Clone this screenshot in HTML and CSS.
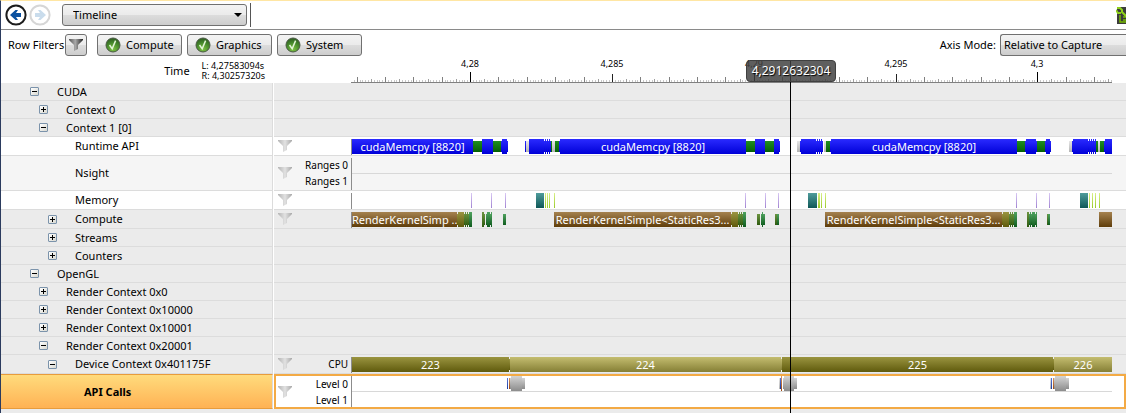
FILE: index.html
```html
<!DOCTYPE html>
<html lang="en">
<head>
<meta charset="utf-8">
<title>Timeline</title>
<link rel="stylesheet" href="styles.css">
</head>
<body>
<svg class="defs" width="0" height="0" aria-hidden="true">
  <defs>
    <linearGradient id="funnel-dark" x1="0" x2="1"><stop offset="0" stop-color="#555"/><stop offset=".45" stop-color="#aaa"/><stop offset="1" stop-color="#222"/></linearGradient>
    <linearGradient id="funnel-light" x1="0" x2="1"><stop offset="0" stop-color="#b4b4b4"/><stop offset=".5" stop-color="#e2e2e2"/><stop offset="1" stop-color="#a8a8a8"/></linearGradient>
    <radialGradient id="green-ball" cx=".5" cy=".8" r=".8"><stop offset="0" stop-color="#7cc142"/><stop offset=".6" stop-color="#43852a"/><stop offset="1" stop-color="#2c5a20"/></radialGradient>
    <symbol id="check" viewBox="0 0 16 16"><circle cx="8" cy="8" r="7" fill="url(#green-ball)" stroke="#4b5a45"/><path d="M4.5 8l2.7 3.8L10.6 3.6" fill="none" stroke="#e4f4d8" stroke-width="1.5"/></symbol>
    <symbol id="funnel" viewBox="0 0 14 12"><path d="M0 0h14v1L9 6v4l-4 2V6L0 1z"/></symbol>
  </defs>
</svg>
<div class="app">
  <header class="toolbar">
    <button class="nav" type="button" aria-label="Back">
      <svg width="22" height="22" viewBox="0 0 22 22"><circle cx="11" cy="11" r="9.600" fill="#fff" stroke="#1c1c1c" stroke-width="2"/><path d="M5 11l5.500-5h2.500L11 9h5v4h-5l2 3h-2.500z" fill="#0a50a0"/></svg>
    </button>
    <button class="nav" type="button" aria-label="Forward" disabled>
      <svg width="22" height="22" viewBox="0 0 22 22"><circle cx="11" cy="11" r="9.600" fill="#fff" stroke="#d6d6d6" stroke-width="2"/><path d="M17 11l-5.500-5H9l2 3H6v4h5l-2 3h2.500z" fill="#c9dcec"/></svg>
    </button>
    <div class="page-select">
      <select class="combo" aria-label="Page"><option>Timeline</option></select>
      <svg class="combo-arrow" width="8" height="4" viewBox="0 0 8 4"><path d="M0 0h8L4 4z"/></svg>
    </div>
    <span class="separator"></span>
    <button class="options" type="button" aria-label="Options">
      <svg width="16" height="17" viewBox="0 0 16 17"><path fill="#3c3c3c" d="M1 0h15v17H1z"/><path d="M4 8v7h10M7 10h3M7 13h6M12 3h4" stroke="#76b900" fill="none" stroke-width="1.500"/><path d="M1 1l3 0 2 2v2l7 7M0 3l2 3h3" stroke="#8ed01c" stroke-width="2" fill="none"/></svg>
    </button>
  </header>

  <div class="filters">
    <span class="caption">Row Filters</span>
    <button class="btn icon-btn" type="button" aria-label="Filter rows"><svg width="14" height="12" fill="url(#funnel-dark)"><use href="#funnel"/></svg></button>
    <button class="btn" type="button"><svg width="16" height="16"><use href="#check"/></svg>Compute</button>
    <button class="btn" type="button"><svg width="16" height="16"><use href="#check"/></svg>Graphics</button>
    <button class="btn" type="button"><svg width="16" height="16"><use href="#check"/></svg>System</button>
    <label class="axis-label" for="axis-mode">Axis Mode:</label>
    <select class="combo axis-mode" id="axis-mode"><option>Relative to Capture</option></select>
  </div>

  <main class="timeline">
    <div class="time-row">
      <div class="time-info"><span>Time</span><div class="range">L: 4,27583094s<br>R: 4,30257320s</div></div>
      <div class="ruler" id="ruler"></div>
    </div>
    <div id="rows"></div>
    <div class="cursor-layer"><div class="cursor" id="cursor"><output class="cursor-time">4,2912632304</output></div></div>
  </main>
</div>
<script src="timeline.js"></script>
</body>
</html>
```
FILE: styles.css
```css
* { box-sizing: border-box; }

body {
  margin: 0;
  overflow: hidden;
  background: #fff;
  color: #000;
  font: 11px/18px "Noto Sans", "Open Sans", sans-serif;
}

button, select { font: inherit; color: inherit; }
button { padding: 0; }
.defs { position: absolute; }

.app {
  display: flex;
  flex-direction: column;
  min-height: 100vh;
  border-left: 1px solid #2b3b5e;
  border-top: 1px solid #ffe6a3;
}

.toolbar {
  display: flex;
  align-items: center;
  height: 29px;
  padding-left: 4px;
  border-bottom: 1px solid #8a8a8a;
}
.nav {
  width: 22px;
  height: 22px;
  margin-right: 2px;
  border: 0;
  background: none;
}
.nav svg { display: block; }
.page-select {
  position: relative;
  width: 185px;
  margin-left: 9px;
}
.combo {
  display: block;
  width: 100%;
  height: 22px;
  padding: 0 10px;
  border: 1px solid #707070;
  border-radius: 3px;
  background: linear-gradient(#f3f3f3, #ebebeb 50%, #dddddd 50%, #cdcdcd);
  appearance: none;
}
.combo-arrow { position: absolute; right: 5px; top: 9px; }
.separator { width: 1px; height: 24px; margin-left: 3px; background: #555; }
.options { display: flex; width: 10px; margin-left: auto; border: 0; background: none; overflow: hidden; }
.options svg { flex: none; }

.filters {
  display: flex;
  align-items: center;
  height: 29px;
  padding-left: 7px;
}
.caption { width: 57px; white-space: nowrap; }
.btn {
  display: flex;
  align-items: center;
  gap: 5px;
  width: 85px;
  height: 22px;
  margin-right: 5px;
  padding-left: 7px;
  border: 1px solid #707070;
  border-radius: 3px;
  background: linear-gradient(#f3f3f3, #ebebeb 50%, #dddddd 50%, #cdcdcd);
}
.icon-btn { width: 22px; margin-right: 10px; padding-left: 3px; }
.axis-label { margin-left: auto; margin-right: 4px; white-space: nowrap; }
.axis-mode {
  flex: none;
  width: 126px;
  padding: 0 3px;
  border-right: 0;
  border-radius: 3px 0 0 3px;
}

.timeline {
  position: relative;
  flex: 1;
  background: #ebebeb;
}
.time-row {
  display: flex;
  height: 24px;
  background: #fff;
}
.time-info {
  display: flex;
  align-items: center;
  justify-content: flex-end;
  gap: 12px;
  width: 350px;
  padding-right: 86px;
}
.range { font-size: 9px; line-height: 10px; }
.ruler {
  position: relative;
  flex: 1;
  margin-right: 14px;
  border-bottom: 1px solid #808080;
}
.tick { position: absolute; bottom: 0; width: 1px; height: 2px; background: #c8c8c8; }
.tick.half { height: 3px; background: #a0a0a0; }
.tick.unit { height: 5px; background: #808080; }
.tick.five { height: 8px; background: #222; }
.tick.ten { height: 10px; background: #000; }
.tick-label {
  position: absolute;
  top: 0;
  font-size: 9px;
  line-height: 10px;
  transform: translateX(-50%);
}

.row {
  display: flex;
  height: 18px;
}
.row.single { height: 19px; }
.row.double { height: 35px; }
.label, .lane { border-bottom: 1px solid #dcdcdc; }
.label {
  display: flex;
  align-items: center;
  gap: 18px;
  width: 272px;
  border-right: 1px solid #dcdcdc;
  white-space: nowrap;
}
.depth-0 { padding-left: 29px; }
.depth-1 { padding-left: 38px; }
.depth-2 { padding-left: 47px; }
.leaf { padding-left: 74px; }
.leaf.deep { padding-left: 83px; }
.lane {
  display: flex;
  flex: 1;
  min-width: 0;
  margin-left: 1px;
  border-left: 0;
}
.label, .lane { background: #ebebeb; }
.row { background: #fff; }
.white > * { background: #fff; }
.pale > * { background: #f5f5f5; }

.toggle {
  width: 9px;
  height: 9px;
  border: 1px solid #7b93ab;
  border-radius: 1px;
  background:
    linear-gradient(#000, #000) center / 5px 1px no-repeat,
    linear-gradient(135deg, #fff, #d8d8d0);
}
.toggle.closed {
  background:
    linear-gradient(#000, #000) center / 5px 1px no-repeat,
    linear-gradient(#000, #000) center / 1px 5px no-repeat,
    linear-gradient(135deg, #fff, #d8d8d0);
}

.lane-head {
  display: flex;
  align-items: center;
  justify-content: space-between;
  width: 77px;
  padding: 0 3px 0 4px;
}
.lane-head svg { fill: url(#funnel-light); }
.levels { font-size: 10px; line-height: 16px; text-align: right; }
.track {
  position: relative;
  flex: 1;
  margin: 2px 14px 0 0;
}
.track::before {
  content: "";
  position: absolute;
  inset: 0 auto 0 0;
  width: 1px;
  background: #8c8c8c;
}
.double .track::after {
  content: "";
  position: absolute;
  inset: 15px 0 auto 1px;
  height: 1px;
  background: #d8d8d8;
}

.selected .label {
  border-top: 1px solid #e89c3c;
  border-bottom-color: #e89c3c;
  background: linear-gradient(#ffdb7c, #ffb254);
  font-weight: bold;
}
.selected .lane {
  border: 2px solid #f3aa45;
  background: #fff;
}
.selected .lane-head { width: 75px; padding-left: 2px; }
.selected .track { margin: 0 12px 0 0; }

.bar {
  position: absolute;
  top: 0;
  height: 15px;
  color: #fff;
  line-height: 15px;
  text-align: center;
  white-space: nowrap;
}
.bar.short { top: 2px; height: 11px; }
.blue { background: linear-gradient(#2a2aff, #0000d8); }
.green { background: linear-gradient(#1f8f1f, #056005); }
.grey { background: linear-gradient(#d4d4d4, #8c8c8c); }
.silver { background: linear-gradient(#e6e6e6, #b4b4b4); }
.purple { background: linear-gradient(#d9c8f4, #a184d2); }
.teal { background: linear-gradient(#4f9c9c, #0e5757); }
.lime { background: linear-gradient(#d9f08a, #9acb2a); }
.brown { background: linear-gradient(#a5824f, #5f3d0a); }
.olive { background: linear-gradient(#9a9440, #5f5a0c); }
.khaki { background: linear-gradient(#c4bd70, #857f35); }
.moss { background: linear-gradient(#6c9440, #2e5a10); }
.leafy { background: linear-gradient(#4fa25f, #0f5c1e); }
.navy { background: linear-gradient(#5878d8, #1c3a9c); }
.rust { background: linear-gradient(#d89460, #9c4a14); }

.cursor-layer {
  position: absolute;
  inset: 1px 14px 0 350px;
  pointer-events: none;
}
.cursor {
  position: absolute;
  inset: 0 auto 0 0;
  width: 1px;
  background: #000;
}
.cursor-time {
  position: absolute;
  top: 0;
  left: -44px;
  width: 90px;
  height: 22px;
  border: 1px solid #404040;
  border-radius: 4px;
  background: rgba(64, 64, 64, 0.84);
  color: #fff;
  font-size: 12px;
  line-height: 20px;
  text-align: center;
  text-shadow: 1px 1px 1px #000;
}
```
FILE: timeline.js
```js
// A leading "-" on the kind makes a low bar, "|" a row of one-step teeth.
const SCALE = 761;
const pct = v => (v / SCALE * 100) + '%';

const runtime = [
  ['blue', 1, 122, 'cudaMemcpy [8820]'], ['-green', 122, 131], ['blue', 131, 142], ['-green', 142, 150], ['-blue', 150, 157], ['blue', 151, 156],
  ['-blue', 174, 175], ['-silver', 175, 178], ['blue', 178, 193], ['|blue', 193, 200], ['-green', 200, 201], ['-silver', 201, 204], ['-green', 204, 208], ['-blue', 208, 209],
  ['blue', 209, 395, 'cudaMemcpy [8820]'], ['-green', 395, 404], ['blue', 404, 414], ['-green', 414, 423], ['-blue', 423, 429], ['blue', 423, 428],
  ['-silver', 446, 449], ['-blue', 449, 450], ['blue', 450, 465], ['|blue', 465, 472], ['-silver', 473, 475], ['-green', 475, 479], ['-blue', 479, 480],
  ['blue', 480, 666, 'cudaMemcpy [8820]'], ['-green', 666, 674], ['blue', 675, 685], ['-blue', 674, 686], ['-green', 686, 694], ['-blue', 694, 700], ['blue', 695, 699],
  ['-silver', 718, 721], ['-blue', 721, 722], ['blue', 722, 737], ['|blue', 737, 745], ['-green', 745, 747], ['-silver', 747, 749], ['-green', 749, 753], ['-blue', 753, 754], ['blue', 754, 761]
];
const memory = [
  ...[120, 140, 154, 394, 414, 427, 665, 685, 698].map(x => ['purple', x, x + 1]),
  ['teal', 185, 193], ['teal', 457, 466], ['teal', 729, 737],
  ...[194, 196, 198, 203, 467, 468, 470, 474, 738, 741, 744, 748].map(x => ['lime', x, x + 1])
];
const compute = [
  ['brown', 1, 106, 'RenderKernelSimp ...'], ['-olive', 106, 107], ['olive', 107, 113], ['|moss', 113, 118], ['leafy', 118, 121],
  ['moss', 131, 133], ['-moss', 133, 134], ['|leafy', 135, 141], ['leafy', 136, 139], ['-leafy', 152, 155],
  ['brown', 203, 380, 'RenderKernelSimple<StaticRes3...'], ['-olive', 380, 381], ['olive', 381, 387], ['|moss', 387, 392], ['leafy', 392, 395],
  ['-moss', 406, 409], ['-leafy', 410, 414], ['leafy', 411, 412], ['-moss', 424, 426], ['-leafy', 426, 428],
  ['brown', 474, 651, 'RenderKernelSimple<StaticRes3...'], ['-olive', 651, 652], ['olive', 652, 658], ['|moss', 658, 663], ['leafy', 663, 666],
  ['moss', 676, 678], ['|leafy', 678, 686], ['leafy', 681, 683], ['-moss', 696, 697], ['-leafy', 697, 699], ['brown', 748, 761]
];
const frames = [
  ['olive', 1, 158, '223'], ['-olive', 158, 159], ['khaki', 159, 430, '224'], ['-khaki', 430, 431],
  ['olive', 431, 702, '225'], ['-olive', 702, 703], ['khaki', 703, 761, '226']
];
const calls = [
  ['-navy', 156, 157], ['-rust', 158, 159], ['-grey', 159, 174], ['grey', 160, 171],
  ['-silver', 428, 429], ['-navy', 429, 430], ['rust', 430, 431], ['-grey', 432, 446], ['grey', 433, 443],
  ['-silver', 699, 700], ['-navy', 700, 701], ['-rust', 702, 703], ['-grey', 703, 718], ['grey', 704, 715]
];

const rows = [
  { label: 'CUDA', css: 'depth-0', open: true },
  { label: 'Context 0', css: 'depth-1', open: false },
  { label: 'Context 1 [0]', css: 'depth-1', open: true },
  { label: 'Runtime API', css: 'leaf', row: 'single white', bars: runtime },
  { label: 'Nsight', css: 'leaf', row: 'double pale', bars: [], levels: ['Ranges 0', 'Ranges 1'] },
  { label: 'Memory', css: 'leaf', row: 'single white', bars: memory },
  { label: 'Compute', css: 'depth-2', open: false, row: 'single', bars: compute },
  { label: 'Streams', css: 'depth-2', open: false },
  { label: 'Counters', css: 'depth-2', open: false },
  { label: 'OpenGL', css: 'depth-0', open: true },
  { label: 'Render Context 0x0', css: 'depth-1', open: false },
  { label: 'Render Context 0x10000', css: 'depth-1', open: false },
  { label: 'Render Context 0x10001', css: 'depth-1', open: false },
  { label: 'Render Context 0x20001', css: 'depth-1', open: true },
  { label: 'Device Context 0x401175F', css: 'depth-2', open: true, row: 'single', bars: frames, levels: ['CPU'] },
  { label: 'API Calls', css: 'leaf deep', row: 'double selected', bars: calls, levels: ['Level 0', 'Level 1'] }
];

function add(parent, tag, css, text) {
  const el = document.createElement(tag);
  el.className = css || '';
  if (text) el.textContent = text;
  parent.append(el);
  return el;
}

function addBar(track, css, start, end, text) {
  const bar = add(track, 'div', 'bar ' + css, text);
  bar.style.left = pct(start);
  bar.style.width = pct(end - start);
}

for (const r of rows) {
  const row = add(document.getElementById('rows'), 'div', 'row ' + (r.row || ''));
  const label = add(row, 'div', 'label ' + r.css);
  if ('open' in r) {
    const toggle = add(label, 'button', 'toggle' + (r.open ? '' : ' closed'));
    toggle.type = 'button';
    toggle.setAttribute('aria-label', (r.open ? 'Collapse ' : 'Expand ') + r.label);
  }
  add(label, 'span', '', r.label);
  const lane = add(row, 'div', 'lane');
  if (!r.bars) continue;
  const head = add(lane, 'div', 'lane-head');
  head.innerHTML = '<svg width="14" height="12"><use href="#funnel"/></svg>';
  const levels = add(head, 'div', 'levels');
  for (const name of r.levels || []) add(levels, 'div', '', name);
  const track = add(lane, 'div', 'track');
  for (const [kind, start, end, text] of r.bars) {
    const css = kind.replace(/^[-|]/, '');
    addBar(track, css + (css === kind ? '' : ' short'), start, end, text);
    if (kind[0] === '|') for (let x = start + 1; x < end; x += 2) addBar(track, css, x, x + 1);
  }
}

// Ruler: one tick per 0.1 ms from 4.2759 s to 4.3025 s
const ruler = document.getElementById('ruler');
const LEFT = 42758, STEP = 2.836;
for (let t = 42759; t <= 43026; t++) {
  const size = t % 100 === 0 ? 'ten' : t % 50 === 0 ? 'five' : t % 10 === 0 ? 'unit' : t % 5 === 0 ? 'half' : '';
  const x = Math.round((t - LEFT) * STEP);
  add(ruler, 'i', 'tick ' + size).style.left = pct(x);
  if (t % 50 === 0) add(ruler, 'span', 'tick-label', String(t / 10000).replace('.', ',')).style.left = pct(x);
}
document.getElementById('cursor').style.left = pct(439);
```
